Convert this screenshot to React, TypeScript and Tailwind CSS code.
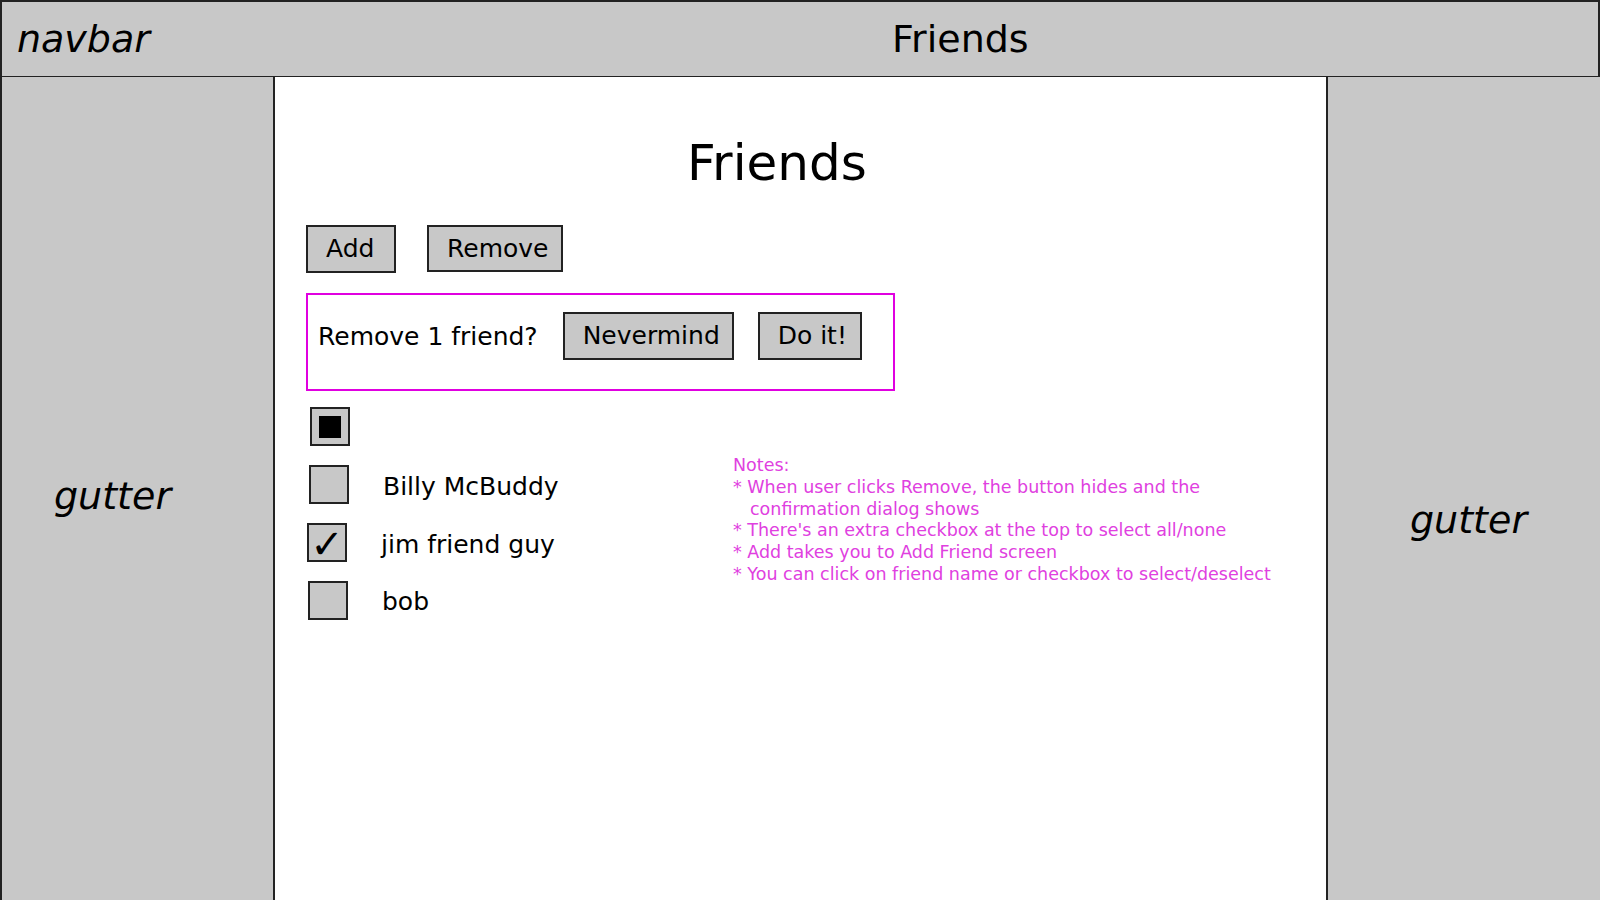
import React from "react";

const font = { fontFamily: '"DejaVu Sans", Verdana, sans-serif' };

function Box({ children, className = "" }: { children?: React.ReactNode; className?: string }) {
  return (
    <div
      className={`w-[40px] h-[39px] border-2 border-[#222] bg-[#c8c8c8] flex items-center justify-center shrink-0 ${className}`}
    >
      {children}
    </div>
  );
}

function Btn({ label, w, h = "h-[47px]" }: { label: string; w: string; h?: string }) {
  return (
    <button
      className={`${w} ${h} border-2 border-[#222] bg-[#c8c8c8] text-[25px] leading-[30px] text-black flex items-center justify-start pl-[18px]`}
    >
      {label}
    </button>
  );
}

export default function App() {
  return (
    <div className="w-[1600px] h-[900px] overflow-hidden flex flex-col bg-white text-black" style={font}>
      {/* navbar */}
      <div className="h-[78px] shrink-0 bg-[#c8c8c8] border-2 border-[#222] flex items-start pt-[14px]">
        <div className="pl-[15px] w-[890px] text-[38px] leading-[46px] italic">navbar</div>
        <div className="text-[38px] leading-[46px]">Friends</div>
      </div>

      <div className="flex flex-1 min-h-0 -mt-[1px]">
        {/* left gutter */}
        <div className="w-[275px] shrink-0 bg-[#c8c8c8] border-l-2 border-r-2 border-[#222] flex flex-col justify-center pt-[14px] pl-[52px]">
          <div className="text-[38px] leading-[46px] italic">gutter</div>
        </div>

        {/* main */}
        <div className="flex-1 bg-white pl-[31px] pt-[56px]">
          <h1 className="text-[50px] leading-[60px] font-normal pl-[381px]">Friends</h1>

          <div className="flex items-start gap-[31px] mt-[32px]">
            <Btn label="Add" w="w-[90px]" h="h-[48px]" />
            <Btn label="Remove" w="w-[136px]" />
          </div>

          <div className="mt-[20px] w-[589px] h-[98px] border-2 border-[#e000e0] flex items-start pt-[17px] pl-[10px]">
            <div className="h-[47px] flex items-center pt-[2px] text-[25px] leading-[30px] mr-[25px]">Remove 1 friend?</div>
            <div className="flex gap-[24px]">
              <Btn label="Nevermind" w="w-[171px]" h="h-[48px]" />
              <Btn label="Do it!" w="w-[104px]" h="h-[48px]" />
            </div>
          </div>

          <div className="flex mt-[16px]">
            <div className="w-[427px] shrink-0 flex flex-col gap-[19px]">
              <div className="flex items-center ml-[4px]">
                <Box>
                  <div className="w-[22px] h-[22px] bg-black" />
                </Box>
              </div>
              <div className="flex items-center ml-[3px] gap-[34px] text-[25px] leading-[30px]">
                <Box />
                <span className="pt-[4px]">Billy McBuddy</span>
              </div>
              <div className="flex items-center ml-[1px] gap-[34px] text-[25px] leading-[30px]">
                <Box>
                  <span className="text-[40px] leading-[40px] mt-[2px] font-bold">✓</span>
                </Box>
                <span className="pt-[4px]">jim friend guy</span>
              </div>
              <div className="flex items-center ml-[2px] gap-[34px] text-[25px] leading-[30px]">
                <Box />
                <span className="pt-[3px]">bob</span>
              </div>
            </div>

            <div className="mt-[48px] text-[17.5px] leading-[21.8px] text-[#e040e0]">
              <div>Notes:</div>
              <div>* When user clicks Remove, the button hides and the</div>
              <div className="pl-[17px]">confirmation dialog shows</div>
              <div>* There's an extra checkbox at the top to select all/none</div>
              <div>* Add takes you to Add Friend screen</div>
              <div>* You can click on friend name or checkbox to select/deselect</div>
            </div>
          </div>
        </div>

        {/* right gutter */}
        <div className="w-[274px] shrink-0 bg-[#c8c8c8] border-l-2 border-[#222] flex flex-col justify-center pt-[62px] pl-[82px]">
          <div className="text-[38px] leading-[46px] italic">gutter</div>
        </div>
      </div>
    </div>
  );
}
